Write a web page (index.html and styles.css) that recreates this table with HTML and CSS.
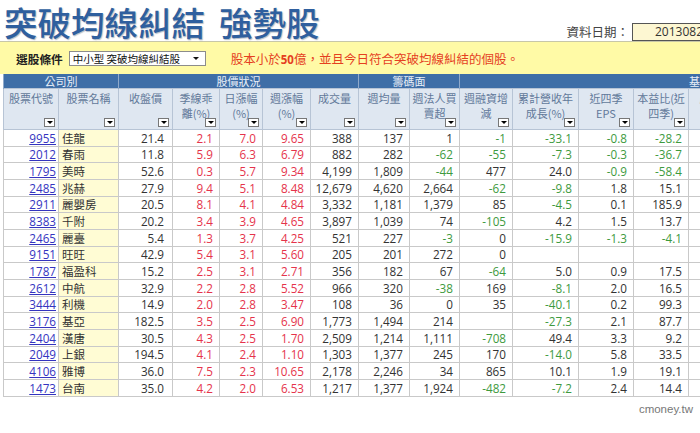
FILE: index.html
```html
<!DOCTYPE html>
<html lang="zh-Hant">
<head>
<meta charset="utf-8">
<title>突破均線糾結 強勢股</title>
<link rel="stylesheet" href="styles.css">
</head>
<body>
<div class="page">
  <header class="top">
    <h1 class="title">突破均線糾結<span class="gap"></span>強勢股</h1>
    <div class="date">
      <span class="date-label">資料日期：</span>
      <span class="date-box">20130823</span>
    </div>
  </header>

  <div class="filter">
    <span class="filter-label">選股條件</span>
    <div class="select"><span>中小型 突破均線糾結股</span><i class="caret"></i></div>
    <span class="desc">股本小於<b>50</b>億，並且今日符合突破均線糾結的個股。</span>
  </div>

  <table class="grid">
    <colgroup>
      <col class="w55"><col class="w60"><col class="w54"><col class="w47"><col class="w43"><col class="w48"><col class="w48"><col class="w51"><col class="w50"><col class="w53"><col class="w66"><col class="w55"><col class="w55"><col class="w66"><col class="w66"><col class="w66"><col class="w65">
    </colgroup>
    <thead>
      <tr class="group">
        <th colspan="2">公司別</th>
        <th colspan="5">股價狀況</th>
        <th colspan="2">籌碼面</th>
        <th colspan="8">基本面</th>
      </tr>
      <tr class="heads">
        <th><span>股票代號</span><i class="dd"></i></th>
        <th><span>股票名稱</span><i class="dd"></i></th>
        <th><span>收盤價</span><i class="dd"></i></th>
        <th><span>季線乖<br>離(%)</span><i class="dd"></i></th>
        <th><span>日漲幅<br>(%)</span><i class="dd"></i></th>
        <th><span>週漲幅<br>(%)</span><i class="dd"></i></th>
        <th><span>成交量</span><i class="dd"></i></th>
        <th><span>週均量</span><i class="dd"></i></th>
        <th><span>週法人買<br>賣超</span><i class="dd"></i></th>
        <th><span>週融資增<br>減</span><i class="dd"></i></th>
        <th><span>累計營收年<br>成長(%)</span><i class="dd"></i></th>
        <th><span>近四季<br>EPS</span><i class="dd"></i></th>
        <th><span>本益比(近<br>四季)</span><i class="dd"></i></th>
        <th><span>股價淨值<br>比</span><i class="dd"></i></th>
        <th><span>殖利率<br>(%)</span><i class="dd"></i></th>
        <th><span>股本<br>(億)</span><i class="dd"></i></th>
        <th><span>產業別</span><i class="dd"></i></th>
      </tr>
    </thead>
    <tbody>
      <tr><td class="code"><a href="#">9955</a></td><td class="name">佳龍</td><td class="price">21.4</td><td class="r">2.1</td><td class="r">7.0</td><td class="r">9.65</td><td>388</td><td>137</td><td>1</td><td class="g">-1</td><td class="g">-33.1</td><td class="g">-0.8</td><td class="g">-28.2</td><td></td><td></td><td></td><td></td></tr>
      <tr><td class="code"><a href="#">2012</a></td><td class="name">春雨</td><td class="price">11.8</td><td class="r">5.9</td><td class="r">6.3</td><td class="r">6.79</td><td>882</td><td>282</td><td class="g">-62</td><td class="g">-55</td><td class="g">-7.3</td><td class="g">-0.3</td><td class="g">-36.7</td><td></td><td></td><td></td><td></td></tr>
      <tr><td class="code"><a href="#">1795</a></td><td class="name">美時</td><td class="price">52.6</td><td class="r">0.3</td><td class="r">5.7</td><td class="r">9.34</td><td>4,199</td><td>1,809</td><td class="g">-44</td><td>477</td><td>24.0</td><td class="g">-0.9</td><td class="g">-58.4</td><td></td><td></td><td></td><td></td></tr>
      <tr><td class="code"><a href="#">2485</a></td><td class="name">兆赫</td><td class="price">27.9</td><td class="r">9.4</td><td class="r">5.1</td><td class="r">8.48</td><td>12,679</td><td>4,620</td><td>2,664</td><td class="g">-62</td><td class="g">-9.8</td><td>1.8</td><td>15.1</td><td></td><td></td><td></td><td></td></tr>
      <tr><td class="code"><a href="#">2911</a></td><td class="name">麗嬰房</td><td class="price">20.5</td><td class="r">8.1</td><td class="r">4.1</td><td class="r">4.84</td><td>3,332</td><td>1,181</td><td>1,379</td><td>85</td><td class="g">-4.5</td><td>0.1</td><td>185.9</td><td></td><td></td><td></td><td></td></tr>
      <tr><td class="code"><a href="#">8383</a></td><td class="name">千附</td><td class="price">20.2</td><td class="r">3.4</td><td class="r">3.9</td><td class="r">4.65</td><td>3,897</td><td>1,039</td><td>74</td><td class="g">-105</td><td>4.2</td><td>1.5</td><td>13.7</td><td></td><td></td><td></td><td></td></tr>
      <tr><td class="code"><a href="#">2465</a></td><td class="name">麗臺</td><td class="price">5.4</td><td class="r">1.3</td><td class="r">3.7</td><td class="r">4.25</td><td>521</td><td>227</td><td class="g">-3</td><td>0</td><td class="g">-15.9</td><td class="g">-1.3</td><td class="g">-4.1</td><td></td><td></td><td></td><td></td></tr>
      <tr><td class="code"><a href="#">9151</a></td><td class="name">旺旺</td><td class="price">42.9</td><td class="r">5.4</td><td class="r">3.1</td><td class="r">5.60</td><td>205</td><td>201</td><td>272</td><td>0</td><td></td><td></td><td></td><td></td><td></td><td></td><td></td></tr>
      <tr><td class="code"><a href="#">1787</a></td><td class="name">福盈科</td><td class="price">15.2</td><td class="r">2.5</td><td class="r">3.1</td><td class="r">2.71</td><td>356</td><td>182</td><td>67</td><td class="g">-64</td><td>5.0</td><td>0.9</td><td>17.5</td><td></td><td></td><td></td><td></td></tr>
      <tr><td class="code"><a href="#">2612</a></td><td class="name">中航</td><td class="price">32.9</td><td class="r">2.2</td><td class="r">2.8</td><td class="r">5.52</td><td>966</td><td>320</td><td class="g">-38</td><td>169</td><td class="g">-8.1</td><td>2.0</td><td>16.5</td><td></td><td></td><td></td><td></td></tr>
      <tr><td class="code"><a href="#">3444</a></td><td class="name">利機</td><td class="price">14.9</td><td class="r">2.0</td><td class="r">2.8</td><td class="r">3.47</td><td>108</td><td>36</td><td>0</td><td>35</td><td class="g">-40.1</td><td>0.2</td><td>99.3</td><td></td><td></td><td></td><td></td></tr>
      <tr><td class="code"><a href="#">3176</a></td><td class="name">基亞</td><td class="price">182.5</td><td class="r">3.5</td><td class="r">2.5</td><td class="r">6.90</td><td>1,773</td><td>1,494</td><td>214</td><td></td><td class="g">-27.3</td><td>2.1</td><td>87.7</td><td></td><td></td><td></td><td></td></tr>
      <tr><td class="code"><a href="#">2404</a></td><td class="name">漢唐</td><td class="price">30.5</td><td class="r">4.3</td><td class="r">2.5</td><td class="r">1.70</td><td>2,509</td><td>1,214</td><td>1,111</td><td class="g">-708</td><td>49.4</td><td>3.3</td><td>9.2</td><td></td><td></td><td></td><td></td></tr>
      <tr><td class="code"><a href="#">2049</a></td><td class="name">上銀</td><td class="price">194.5</td><td class="r">4.1</td><td class="r">2.4</td><td class="r">1.10</td><td>1,303</td><td>1,377</td><td>245</td><td>170</td><td class="g">-14.0</td><td>5.8</td><td>33.5</td><td></td><td></td><td></td><td></td></tr>
      <tr><td class="code"><a href="#">4106</a></td><td class="name">雅博</td><td class="price">36.0</td><td class="r">7.5</td><td class="r">2.3</td><td class="r">10.65</td><td>2,178</td><td>2,246</td><td>34</td><td>865</td><td>10.1</td><td>1.9</td><td>19.1</td><td></td><td></td><td></td><td></td></tr>
      <tr><td class="code"><a href="#">1473</a></td><td class="name">台南</td><td class="price">35.0</td><td class="r">4.2</td><td class="r">2.0</td><td class="r">6.53</td><td>1,217</td><td>1,377</td><td>1,924</td><td class="g">-482</td><td class="g">-7.2</td><td>2.4</td><td>14.4</td><td></td><td></td><td></td><td></td></tr>
    </tbody>
  </table>

  <div class="watermark">cmoney.tw</div>
</div>
</body>
</html>
```

FILE: styles.css
```css
html, body {
  margin: 0;
  padding: 0;
  background: #fff;
  overflow: hidden;
}

body {
  width: 700px;
  height: 433px;
  font-family: "Noto Sans CJK TC", "Noto Sans", sans-serif;
  color: #333;
}

.page {
  width: 700px;
}

/* ---------- title bar ---------- */
.top {
  display: flex;
  justify-content: space-between;
  align-items: flex-start;
  height: 41px;
}

.title {
  margin: 3px 0 0 4px;
  font-size: 33.5px;
  font-weight: 500;
  line-height: 38px;
  color: #2f5f9e;
  text-shadow: 1px 1px 1px rgba(40, 60, 90, 0.35);
  white-space: nowrap;
}

.gap {
  display: inline-block;
  width: 14px;
}

.date {
  align-self: flex-end;
  display: flex;
  align-items: center;
}

.date-label {
  font-size: 12.5px;
  color: #444;
  margin-right: 3px;
}

.date-box {
  box-sizing: border-box;
  width: 100px;
  height: 18px;
  margin-right: -32px;
  padding-left: 22px;
  border: 1px solid #555;
  background: #fdf7d2;
  font-family: "Open Sans", sans-serif;
  font-size: 12px;
  line-height: 16px;
  color: #333;
}

/* ---------- filter bar ---------- */
.filter {
  display: flex;
  align-items: center;
  height: 32px;
  padding-left: 16px;
  border-top: 1px solid #c8c7a8;
  background: #fffaa6;
}

.filter-label {
  font-size: 11.7px;
  font-weight: bold;
  color: #222;
}

.select {
  box-sizing: border-box;
  position: relative;
  display: flex;
  align-items: center;
  width: 137px;
  height: 15px;
  margin-left: 6px;
  padding-left: 3px;
  border: 1px solid #8c8c8c;
  background: #fff;
  font-size: 10.5px;
  color: #111;
}

.caret {
  position: absolute;
  right: 6px;
  top: 5px;
  width: 0;
  height: 0;
  border-left: 3px solid transparent;
  border-right: 3px solid transparent;
  border-top: 3px solid #111;
}

.desc {
  margin-left: 25px;
  font-size: 12.5px;
  color: #e5401f;
}

.desc b {
  font-family: "Open Sans", sans-serif;
  font-weight: 700;
  font-size: 11.5px;
}

/* ---------- grid ---------- */
.grid {
  margin-left: 3px;
  width: 948px;
  table-layout: fixed;
  border-collapse: collapse;
}

.w55 { width: 55px; }
.w60 { width: 60px; }
.w54 { width: 54px; }
.w47 { width: 47px; }
.w43 { width: 43px; }
.w48 { width: 48px; }
.w51 { width: 51px; }
.w50 { width: 50px; }
.w53 { width: 53px; }
.w66 { width: 66px; }
.w65 { width: 65px; }

.group th {
  height: 14px;
  padding: 0;
  background: #3e6ea7;
  border-left: 1px solid #8fa9cb;
  border-right: 1px solid #8fa9cb;
  color: #e9eff7;
  font-size: 11px;
  font-weight: normal;
  line-height: 14px;
  text-align: center;
}

.heads th {
  position: relative;
  height: 38px;
  padding: 2px 0 0;
  background: #dfe7f1;
  border: 1px solid #b7c4d5;
  color: #62799a;
  font-size: 11px;
  font-weight: normal;
  line-height: 15px;
  text-align: center;
  vertical-align: top;
  white-space: nowrap;
  overflow: hidden;
}

.dd {
  position: absolute;
  right: 3px;
  bottom: 2px;
  box-sizing: border-box;
  width: 11px;
  height: 9px;
  border: 1px solid #777;
  background: #fff;
}

.dd::after {
  content: "";
  position: absolute;
  left: 2px;
  top: 2px;
  border-left: 3px solid transparent;
  border-right: 3px solid transparent;
  border-top: 3px solid #000;
}

.grid td {
  height: 15.67px;
  padding: 0 6px 0 0;
  border: 1px solid #c9c9c9;
  font-family: "Open Sans", "Noto Sans CJK TC", sans-serif;
  font-size: 11.7px;
  line-height: 14px;
  color: #333;
  text-align: right;
  white-space: nowrap;
  overflow: hidden;
}

.grid td.code {
  padding-right: 2px;
}

.grid td.code a {
  color: #3434bf;
  text-decoration: underline;
}

.grid td.name {
  padding: 0 0 0 3px;
  background: #fffcd4;
  text-align: left;
  font-family: "Noto Sans CJK TC", sans-serif;
  font-size: 11.5px;
}

.grid td.price {
  padding-right: 8px;
}

.grid td.r {
  color: #e5334b;
}

.grid td.g {
  color: #3e9a3e;
}

/* ---------- watermark ---------- */
.watermark {
  margin-top: 6px;
  padding-right: 7px;
  text-align: right;
  font-family: "Liberation Sans", sans-serif;
  font-size: 11.5px;
  color: #777;
}
```
